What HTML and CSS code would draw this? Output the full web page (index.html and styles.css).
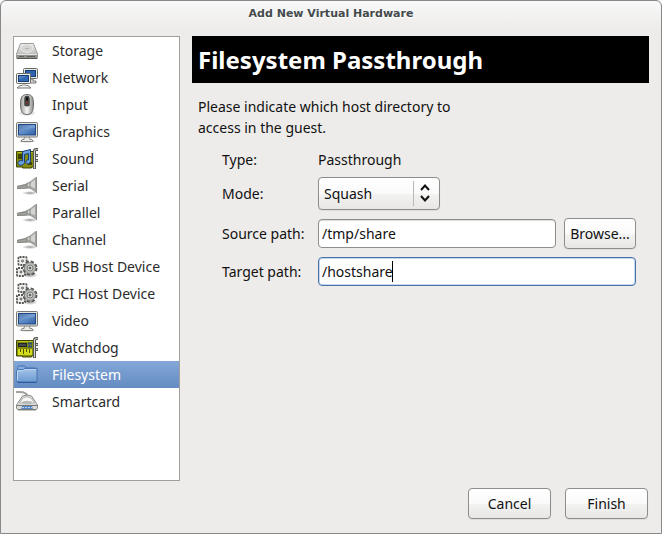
FILE: index.html
```html
<!DOCTYPE html>
<html lang="en">
<head>
<meta charset="utf-8">
<title>Add New Virtual Hardware</title>
<link rel="stylesheet" href="styles.css">
</head>
<body>
<svg class="defs" aria-hidden="true">
  <defs>
    <linearGradient id="g-metal" x1="0" y1="0" x2="0" y2="1"><stop offset="0" stop-color="#f0f0ee"/><stop offset="1" stop-color="#a9aaa6"/></linearGradient>
    <linearGradient id="g-steel" x1="0" y1="0" x2="1" y2="0"><stop offset="0" stop-color="#9c9e9a"/><stop offset=".5" stop-color="#f6f6f5"/><stop offset="1" stop-color="#888a85"/></linearGradient>
    <linearGradient id="g-screen" x1="0" y1="0" x2="1" y2="1"><stop offset="0" stop-color="#2c5a9c"/><stop offset=".5" stop-color="#5f8dca"/><stop offset="1" stop-color="#2f5c9e"/></linearGradient>
    <linearGradient id="g-folder" x1="0" y1="0" x2="0" y2="1"><stop offset="0" stop-color="#a5c4e8"/><stop offset="1" stop-color="#6b9ad2"/></linearGradient>
    <radialGradient id="g-shadow"><stop offset="0" stop-color="#000" stop-opacity=".4"/><stop offset="1" stop-color="#000" stop-opacity="0"/></radialGradient>
    <symbol id="i-disk" viewBox="0 0 22 22">
      <path d="M4.500 3.500h13l4 10.500v4q0 .5-.5.500H1q-.5 0-.5-.500v-4z" fill="url(#g-metal)" stroke="#9b9d99"/>
      <ellipse cx="11" cy="8.500" rx="6" ry="4" fill="#d5d6d3" stroke="#e6e6e4"/>
      <path d="M9 8.500h4" stroke="#b3b4b1"/>
      <path d="M1 14h20v4H1z" fill="#8f918d"/><path d="M1 14.500h20" stroke="#e4e4e2"/>
      <path d="M3 16.500h5M11 16.500h8" stroke="#5f615d"/><path d="M1 18.500h20" stroke="#555753"/>
    </symbol>
    <symbol id="i-network" viewBox="0 0 22 22">
      <path d="M13 12h4v2h3v2h-8z" fill="#d6d7d3" stroke="#7b7d79"/>
      <rect x="7.500" y="1.500" width="14" height="10" rx="1" fill="#e8e8e4" stroke="#6a6c68"/><rect x="9.500" y="3.500" width="10" height="6" fill="#2e64ae" stroke="#173e77"/>
      <path d="M4 18.500h8l3 2.500H1z" fill="#eee" stroke="#777974"/><path d="M6 16h4v3H6z" fill="#c5c6c2"/>
      <rect x=".5" y="6.500" width="14" height="10" rx="1" fill="#eeeeea" stroke="#6a6c68"/><rect x="2.500" y="8.500" width="10" height="6" fill="#3269b5" stroke="#173e77"/>
      <path d="M3 9h8l-7 3H3z" fill="#5583c2"/>
    </symbol>
    <symbol id="i-mouse" viewBox="0 0 22 22">
      <ellipse cx="11" cy="19" rx="9" ry="3" fill="url(#g-shadow)"/>
      <path d="M11 .5c5 0 6.500 3 6.500 9.500S16 20.500 11 20.500 4.500 16.500 4.500 10 6 .5 11 .5z" fill="url(#g-steel)" stroke="#6b6d69"/>
      <path d="M11 1.500c2 0 2.800 1.500 2.800 4v6q-2.800 2-5.600 0v-6c0-2.500.8-4 2.800-4z" fill="#454743"/>
      <rect x="10" y="3" width="2" height="4" rx="1" fill="#111"/><circle cx="11" cy="8.500" r="1" fill="#a02020"/>
    </symbol>
    <symbol id="i-monitor" viewBox="0 0 22 22">
      <ellipse cx="11" cy="20" rx="9" ry="2" fill="url(#g-shadow)"/>
      <path d="M8.500 15.500h5l.5 3h2l1 2H5l1-2h2z" fill="#e9e9e6" stroke="#888a85"/>
      <rect x=".5" y="1.500" width="21" height="14.500" rx="1" fill="#e4e4df" stroke="#777974"/>
      <rect x="2.500" y="3.500" width="17" height="10.500" fill="url(#g-screen)" stroke="#204a87"/>
      <path d="M3 4h16v3Q10 7 3 12z" fill="#fff" opacity=".16"/>
    </symbol>
    <symbol id="i-card" viewBox="0 0 22 22">
      <path d="M.5 3.500h17v15.500h-2v1h-9v-1h-6z" fill="#858d09" stroke="#3f4605"/><path d="M1.500 4.500h15" stroke="#b7c31c"/>
      <path d="M18.500 21V3q0-1.500 1.500-1.500h2" fill="none" stroke="#555753" stroke-width="3"/><path d="M18.500 20.500V3q0-1.500 2-1.500h1" fill="none" stroke="#d3d7cf"/>
      <path d="M20 7.500h2M20 12.500h2" stroke="#555753" stroke-width="3"/><path d="M20 7.500h1.500M20 12.500h1.500" stroke="#d3d7cf"/>
    </symbol>
    <symbol id="i-sound" viewBox="0 0 22 22"><use href="#i-card"/>
      <path d="M2 6h6v5H2zM12 14h4v3h-4z" fill="#3f4605"/>
      <path d="M6.500 3.500l8-2v12c-1 3.500-5.500 3-4.500 0 .5-1.500 1.500-2 2.500-1.500V5.500l-4 1v8c-1 4-7 3.500-6.500 0 .7-2 3.500-2.400 4.500-1.500z" fill="#6ba0dd" stroke="#173e77"/>
    </symbol>
    <symbol id="i-watchdog" viewBox="0 0 22 22"><use href="#i-card"/>
      <path d="M2 12h14v6H2z" fill="#d4dc1c"/><path d="M4.500 12v3M7.500 12v5M10.500 12v3M13.500 12v4" stroke="#4d5604"/>
      <rect x="2.500" y="6.500" width="8" height="3" fill="#444a50" stroke="#202427"/><path d="M12 6.500h4M12 9.500h4" stroke="#2c4f80" stroke-width="2"/>
    </symbol>
    <symbol id="i-plug" viewBox="0 0 22 22">
      <ellipse cx="14" cy="18" rx="8" ry="2" fill="url(#g-shadow)"/>
      <path d="M1 11l10-2.500v5L1 14z" fill="#a0a29e"/><path d="M1 11.500l10-2M1 13.500l10-.5" stroke="#858783"/>
      <path d="M10.500 8L14 6.500l5-4L21 2v16l-2-1-4.500-3-4-.5z" fill="#a3a5a1"/>
      <path d="M11.500 9l3-1L19 4.500v9l-4.500-2-3-.5z" fill="#d3d4d1"/><path d="M20.500 2v16" stroke="#8d8f8b"/><path d="M11 8v5M14 7v6" stroke="#858783"/>
    </symbol>
    <symbol id="i-gears" viewBox="0 0 22 22">
      <ellipse cx="14" cy="19" rx="8" ry="3" fill="url(#g-shadow)"/>
      <g fill="#efefed" stroke="#555753">
        <rect x="2.500" y="1" width="8" height="8" rx="1" stroke-width="2" stroke-dasharray="2 1"/>
        <rect x="3.500" y="2" width="6" height="6" stroke="none"/><circle cx="6.500" cy="5" r="1"/>
        <rect x="1" y="12" width="8" height="8" rx="1" stroke-width="2" stroke-dasharray="2 1"/>
        <rect x="2" y="13" width="6" height="6" stroke="none"/><circle cx="5" cy="16" r="1"/>
        <circle cx="14" cy="12" r="6" fill="none" stroke-width="3" stroke-dasharray="3 1.700"/>
        <circle cx="14" cy="12" r="5.500" fill="#bcbebb" stroke="#8a8c88"/>
        <circle cx="14" cy="12" r="3" fill="#ddd" stroke="#777974"/><circle cx="14" cy="12" r="1" fill="#777"/>
      </g>
    </symbol>
    <symbol id="i-folder" viewBox="0 0 22 22">
      <path d="M1.500 5.500v-2l1-1.500h6l1.500 2h9.500v4H1.500z" fill="#86ade0" stroke="#3f6fae"/>
      <path d="M.5 6.500l1-1h6l1.500-1h12v12.500l-.5 1h-19l-.5-1z" fill="url(#g-folder)" stroke="#4474b3"/>
      <path d="M1.500 16.500V7l6-.5 1.500-1h11" fill="none" stroke="#c0d6f0"/><path d="M1.500 18.500h19" stroke="#2f5b98"/>
    </symbol>
    <symbol id="i-smartcard" viewBox="0 0 22 22">
      <path d="M0 1h4q6 0 7.500 4" fill="none" stroke="#a0a29e" stroke-width="2"/>
      <path d="M6.500 5Q11 3 15.500 5l5 7.500 1 1.500v3.500l-2 1.500h-17l-2-1.500V14l1-1.500z" fill="#dcddda" stroke="#888a85"/>
      <path d="M7 7q4-2.500 8 0l3.500 5h-15z" fill="#f8f8f7" stroke="#b6b8b4"/><ellipse cx="11" cy="11.500" rx="5" ry="1.800" fill="#b9bbb8"/>
      <path d="M1 14.500h20" stroke="#777974"/><path d="M6 15h10l1 3.500H5z" fill="#5687c5"/><path d="M6 16.500h10" stroke="#b9d0ee" stroke-dasharray="2 1"/><path d="M2 18.500h18" stroke="#777974"/>
    </symbol>
  </defs>
</svg>
<div class="window">
  <h1 class="titlebar">Add New Virtual Hardware</h1>
  <div class="content">
    <nav class="list" aria-label="Hardware type">
      <a class="item" href="#storage"><svg class="icon"><use href="#i-disk"/></svg>Storage</a>
      <a class="item" href="#network"><svg class="icon"><use href="#i-network"/></svg>Network</a>
      <a class="item" href="#input"><svg class="icon"><use href="#i-mouse"/></svg>Input</a>
      <a class="item" href="#graphics"><svg class="icon"><use href="#i-monitor"/></svg>Graphics</a>
      <a class="item" href="#sound"><svg class="icon"><use href="#i-sound"/></svg>Sound</a>
      <a class="item" href="#serial"><svg class="icon"><use href="#i-plug"/></svg>Serial</a>
      <a class="item" href="#parallel"><svg class="icon"><use href="#i-plug"/></svg>Parallel</a>
      <a class="item" href="#channel"><svg class="icon"><use href="#i-plug"/></svg>Channel</a>
      <a class="item" href="#usb"><svg class="icon"><use href="#i-gears"/></svg>USB Host Device</a>
      <a class="item" href="#pci"><svg class="icon"><use href="#i-gears"/></svg>PCI Host Device</a>
      <a class="item" href="#video"><svg class="icon"><use href="#i-monitor"/></svg>Video</a>
      <a class="item" href="#watchdog"><svg class="icon"><use href="#i-watchdog"/></svg>Watchdog</a>
      <a class="item selected" href="#filesystem" aria-current="page"><svg class="icon"><use href="#i-folder"/></svg>Filesystem</a>
      <a class="item" href="#smartcard"><svg class="icon"><use href="#i-smartcard"/></svg>Smartcard</a>
    </nav>
    <main class="page">
      <h2 class="banner">Filesystem Passthrough</h2>
      <p class="intro">Please indicate which host directory to<br>access in the guest.</p>
      <form class="fields" id="fs">
        <span>Type:</span><span>Passthrough</span>
        <label for="mode">Mode:</label>
        <div class="combo">
          <select id="mode"><option>Squash</option></select>
          <svg class="arrows" viewBox="0 0 27 25"><path d="M.5 0v25" stroke="#b9b8b6"/><path d="M8 9l4-4.500L16 9M8 15l4 4.500 4-4.500" fill="none" stroke="#111" stroke-width="2"/></svg>
        </div>
        <label for="source">Source path:</label>
        <div class="path"><input id="source" type="text" value="/tmp/share"><button type="button">Browse...</button></div>
        <label for="target">Target path:</label>
        <div class="path"><input class="focused" id="target" type="text" value="/hostshare"><i class="caret"></i></div>
      </form>
    </main>
  </div>
  <footer class="actions"><button type="button">Cancel</button><button type="submit" form="fs">Finish</button></footer>
</div>
</body>
</html>
```
FILE: styles.css
```css
* { box-sizing: border-box; }
body {
  margin: 0;
  background: #fff;
  color: #111;
  font: 14px/18px "Noto Sans", sans-serif;
}
.defs { position: absolute; width: 0; height: 0; }
.window {
  display: flex;
  flex-direction: column;
  min-height: 100vh;
  border: 1px solid #888;
  border-radius: 6px 6px 0 0;
  background: linear-gradient(#f8f8f8, #edecea 28px);
}
.titlebar {
  margin: 0;
  height: 35px;
  color: #444a4c;
  font: bold 11px/26px "DejaVu Sans", sans-serif;
  text-align: center;
  text-shadow: 0 1px #fff;
}
.content {
  display: grid;
  flex: 1;
  grid-template-columns: 167px 1fr;
  gap: 12px;
  padding: 0 12px;
}
.list {
  border: 1px solid #a09f9d;
  background: #fff;
}
.item {
  display: flex;
  align-items: center;
  gap: 14px;
  height: 27px;
  padding-left: 2px;
  color: #2b2b2b;
  text-decoration: none;
}
.item.selected {
  background: linear-gradient(#83a7d8, #648cc2);
  color: #fff;
}
.icon { width: 22px; height: 22px; }
.banner {
  margin: 0;
  padding: 0 6px;
  background: #000;
  color: #fff;
  font: bold 24px/47px "Noto Sans", sans-serif;
}
.intro {
  margin: 13px 6px;
  line-height: 21px;
}
.fields {
  display: grid;
  grid-template-columns: 96px 1fr;
  align-items: center;
  gap: 8px 0;
  padding: 0 13px 0 30px;
}
input, select, button {
  border: 1px solid #8e8d8a;
  border-radius: 4px;
  color: #111;
  font: inherit;
}
select, button {
  background: linear-gradient(#fff, #fafafa 50%, #f3f3f2 51%, #e8e7e5);
  box-shadow: 0 1px 1px #dddcda;
}
.combo { position: relative; width: 122px; }
select {
  display: block;
  width: 100%;
  height: 33px;
  padding: 0 5px;
  appearance: none;
}
.arrows {
  position: absolute;
  top: 4px;
  right: 0;
  width: 27px;
  height: 25px;
  pointer-events: none;
}
.path {
  display: flex;
  position: relative;
  align-items: center;
  gap: 8px;
}
input {
  flex: 1;
  min-width: 0;
  height: 29px;
  padding: 0 3px;
  background: #fff;
  box-shadow: inset 0 1px 1px #ddd;
}
input.focused {
  border-color: #4a72aa;
  box-shadow: inset 0 0 0 1px #c5d7ee;
}
button { height: 31px; padding: 0 4px; }
.path button { width: 72px; }
.caret {
  position: absolute;
  left: 74px;
  width: 1px;
  height: 21px;
  background: #000;
}
.actions {
  display: flex;
  justify-content: flex-end;
  gap: 14px;
  padding: 7px 13px 14px;
}
.actions button { width: 83px; }
```
